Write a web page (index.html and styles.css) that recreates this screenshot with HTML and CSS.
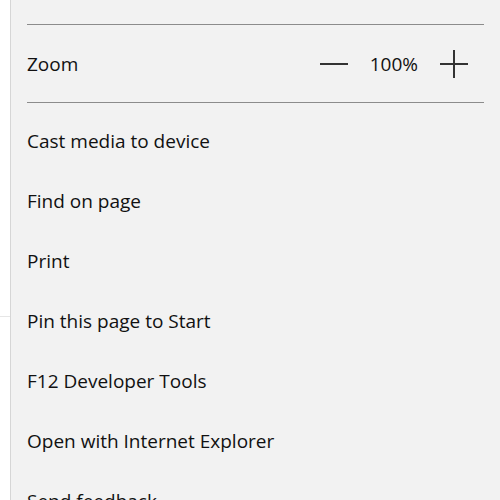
FILE: index.html
```
<!DOCTYPE html>
<html>
<head>
<meta charset="utf-8">
<link rel="stylesheet" href="styles.css">
</head>
<body>
<div class="page">
  <div class="strip"><div class="strip-line"></div></div>
  <div class="menu">
    <div class="top"></div>
    <div class="divider"></div>
    <div class="zoom-row">
      <span class="label">Zoom</span>
      <div class="zoom-ctrl">
        <span class="minus"></span>
        <span class="pct">100%</span>
        <span class="plus"></span>
      </div>
    </div>
    <div class="divider"></div>
    <ul class="items">
      <li>Cast media to device</li>
      <li>Find on page</li>
      <li>Print</li>
      <li>Pin this page to Start</li>
      <li>F12 Developer Tools</li>
      <li>Open with Internet Explorer</li>
      <li>Send feedback</li>
    </ul>
  </div>
</div>
</body>
</html>
```
FILE: styles.css
```
html, body {
  margin: 0;
  padding: 0;
  height: 100%;
  overflow: hidden;
  background: #ffffff;
}
.page {
  display: flex;
  height: 500px;
  font-family: "Open Sans", "Noto Sans", sans-serif;
  color: #111111;
}
.strip {
  width: 10px;
  background: #ffffff;
  border-right: 1px solid #d6d6d6;
  padding-top: 316px;
  box-sizing: content-box;
}
.strip-line {
  height: 1px;
  background: #e6e6e6;
}
.menu {
  flex: 1;
  background: #f2f2f2;
  padding: 0 16px 0 16px;
  overflow: hidden;
}
.top {
  height: 24px;
}
.divider {
  height: 1px;
  background: #8c8c8c;
}
.zoom-row {
  height: 77px;
  display: flex;
  align-items: center;
  justify-content: space-between;
  font-size: 19px;
}
.zoom-ctrl {
  display: flex;
  align-items: center;
  gap: 22px;
  margin-right: 16px;
}
.minus {
  width: 28px;
  height: 2px;
  background: #333;
}
.plus {
  width: 28px;
  height: 28px;
  position: relative;
}
.plus::before, .plus::after {
  content: "";
  position: absolute;
  background: #333;
}
.plus::before {
  left: 0; right: 0; top: 13px; height: 2px;
}
.plus::after {
  top: 0; bottom: 0; left: 13px; width: 2px;
}
.items {
  list-style: none;
  margin: 0;
  padding: 8px 0 0 0;
  font-size: 19px;
}
.items li {
  height: 60px;
  line-height: 60px;
  white-space: nowrap;
}
```
